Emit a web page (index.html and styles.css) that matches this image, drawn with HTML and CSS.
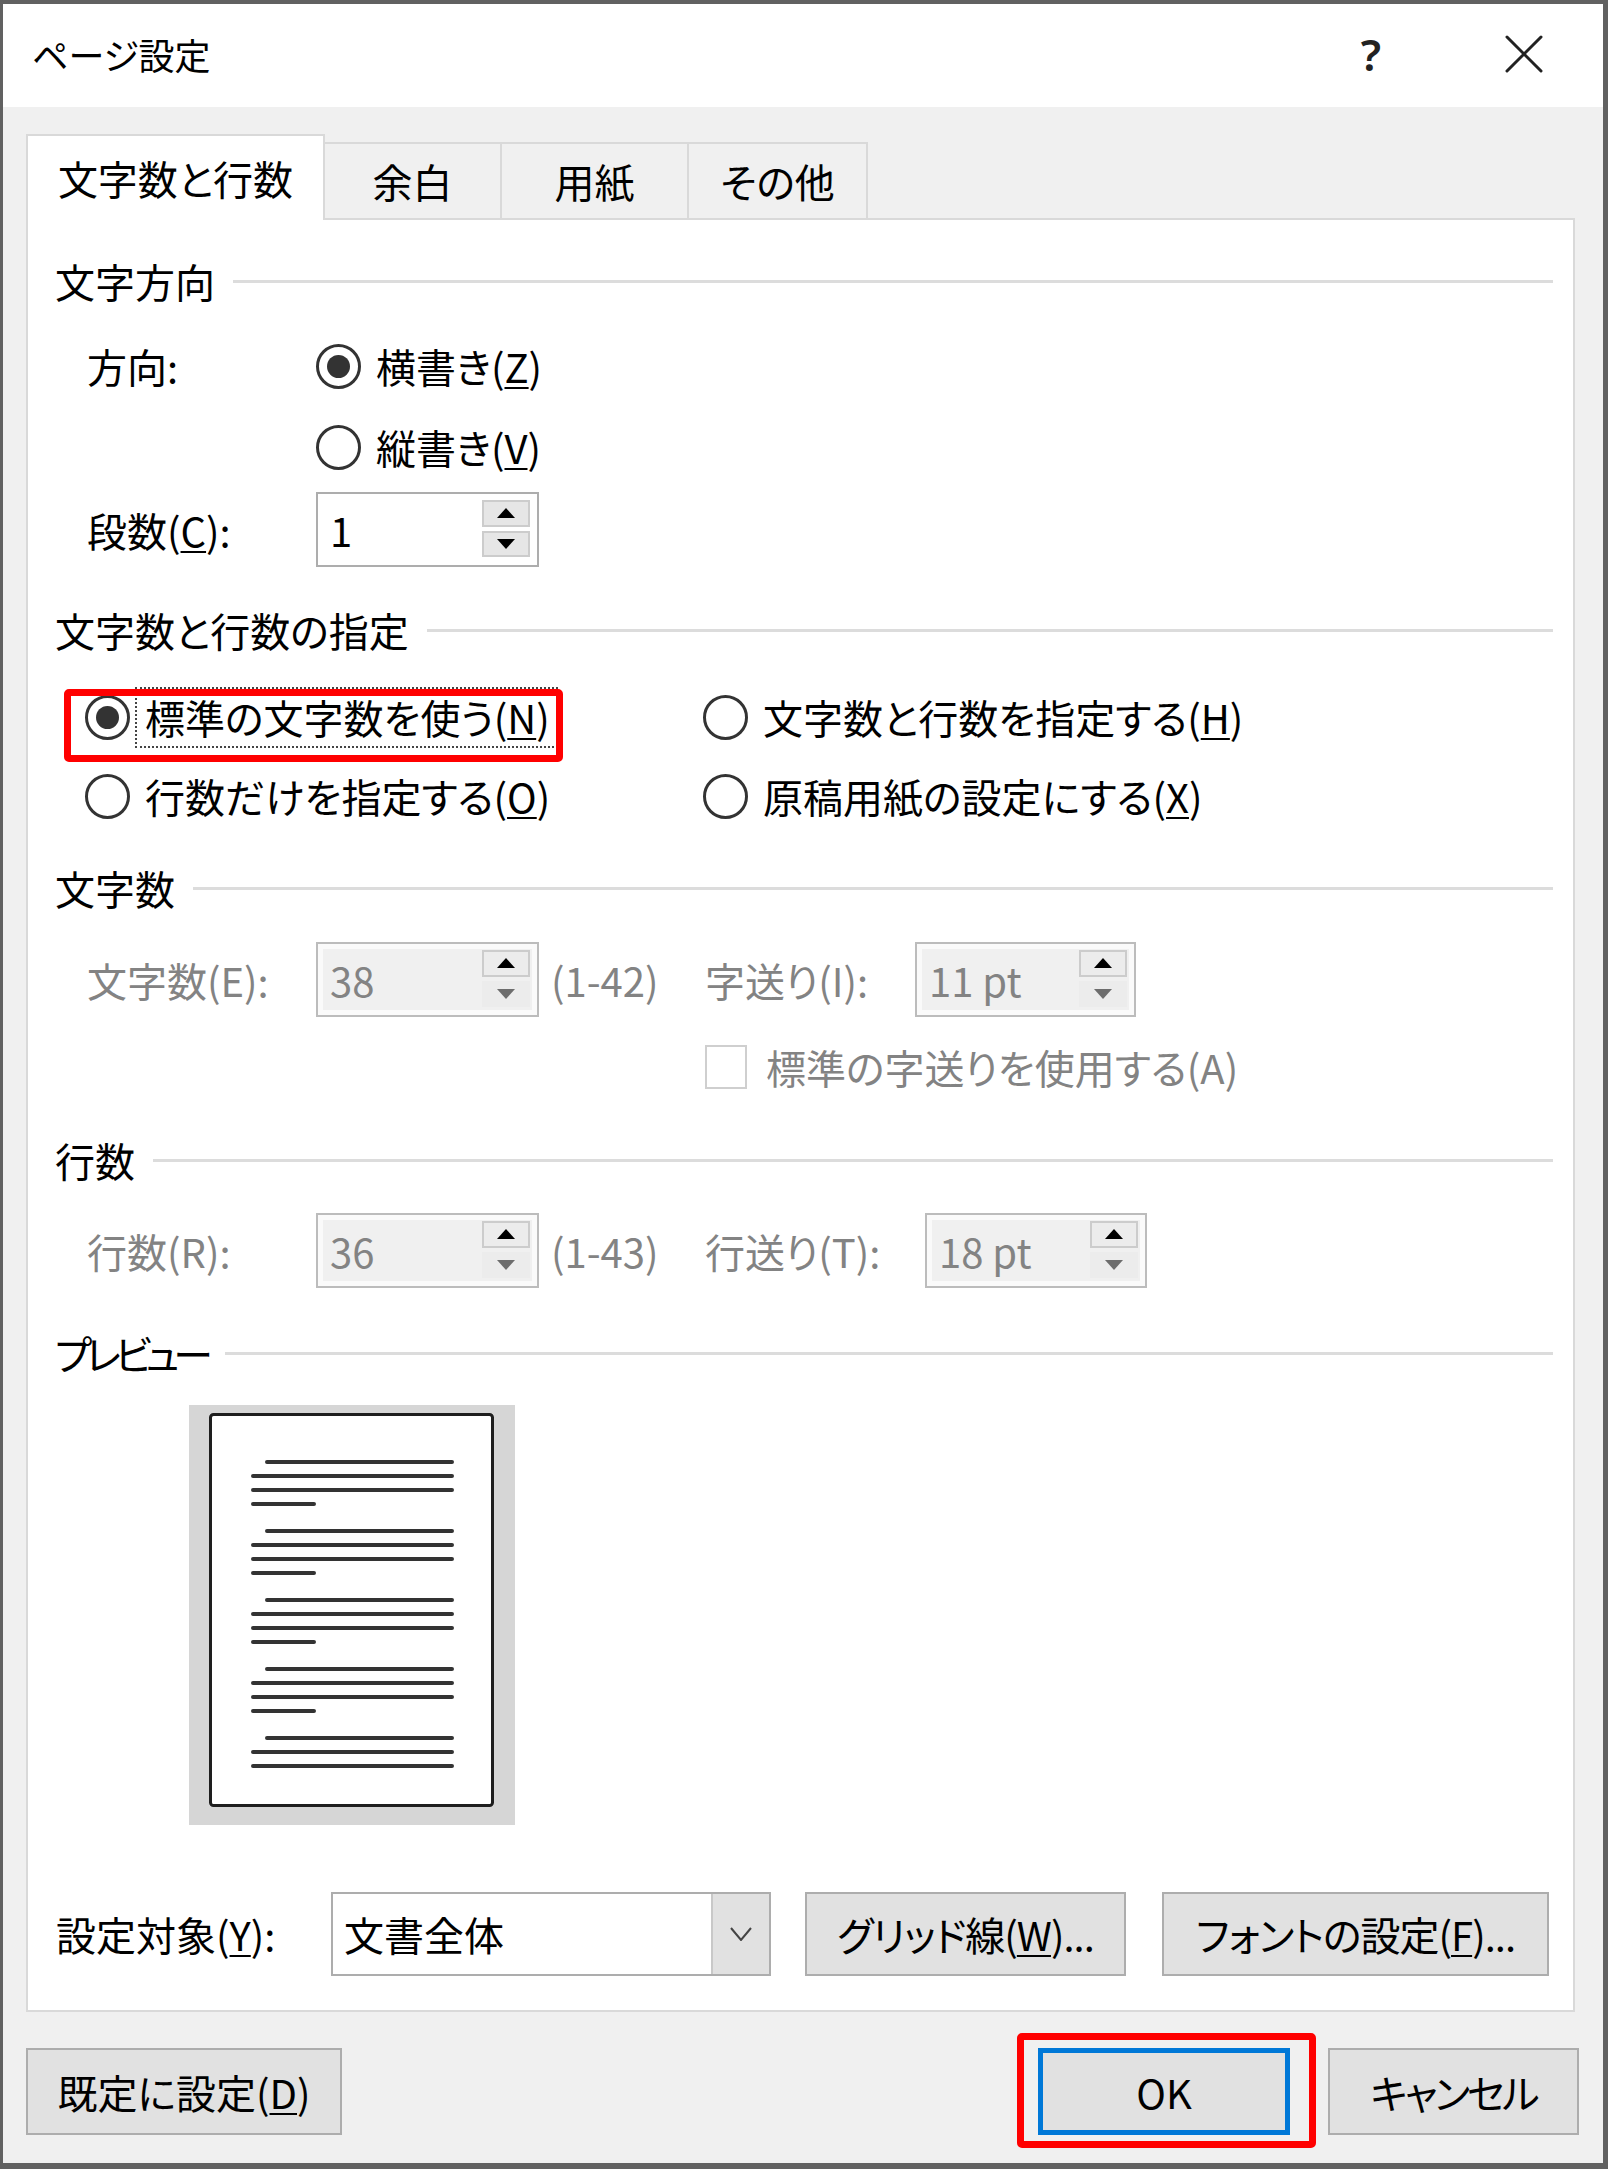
FILE: index.html
```html
<!DOCTYPE html>
<html lang="ja">
<head>
    <meta charset="UTF-8">
    <title>ページ設定</title>
    <link rel="stylesheet" href="styles.css">
</head>
<body>
    <div class="dialog">
        <div class="titlebar">
            <span class="title">ページ設定</span>
            <span class="help">?</span>
            <svg class="close" width="38" height="38" viewBox="0 0 38 38">
                <path d="M2 2L36 36M36 2L2 36" stroke="#222" stroke-width="3" stroke-linecap="round"/>
            </svg>
        </div>

        <div class="tabs">
            <div class="tab active">文字数と行数</div>
            <div class="tab">余白</div>
            <div class="tab">用紙</div>
            <div class="tab">その他</div>
        </div>

        <div class="panel">
            <div class="sec-title sec-dir">文字方向</div>
            <div class="row r-dir">
                <span class="lbl">方向:</span>
                <label class="opt"><span class="radio on"></span><span class="opt-text">横書き(<u>Z</u>)</span></label>
            </div>
            <div class="row r-vert">
                <span class="lbl"></span>
                <label class="opt"><span class="radio"></span><span class="opt-text">縦書き(<u>V</u>)</span></label>
            </div>
            <div class="row r-cols">
                <span class="lbl">段数(<u>C</u>):</span>
                <div class="spin">
                    <span class="spin-val">1</span>
                    <div class="spin-btns">
                        <span class="spin-btn"><i class="tri up"></i></span>
                        <span class="spin-btn"><i class="tri down"></i></span>
                    </div>
                </div>
            </div>

            <div class="sec-title sec-grid">文字数と行数の指定</div>
            <div class="opt-grid">
                <label class="opt marked"><span class="radio on"></span><span class="opt-text focus">標準の文字数を使う(<u>N</u>)</span></label>
                <label class="opt"><span class="radio"></span><span class="opt-text">文字数と行数を指定する(<u>H</u>)</span></label>
                <label class="opt"><span class="radio"></span><span class="opt-text">行数だけを指定する(<u>O</u>)</span></label>
                <label class="opt"><span class="radio"></span><span class="opt-text">原稿用紙の設定にする(<u>X</u>)</span></label>
            </div>

            <div class="sec-title sec-chars">文字数</div>
            <div class="row r-chars dis">
                <span class="lbl">文字数(E):</span>
                <div class="spin disabled">
                    <span class="spin-val">38</span>
                    <div class="spin-btns">
                        <span class="spin-btn"><i class="tri up"></i></span>
                        <span class="spin-btn off"><i class="tri down"></i></span>
                    </div>
                </div>
                <span class="range">(1-42)</span>
                <span class="lbl2">字送り(I):</span>
                <div class="spin disabled">
                    <span class="spin-val">11 pt</span>
                    <div class="spin-btns">
                        <span class="spin-btn"><i class="tri up"></i></span>
                        <span class="spin-btn off"><i class="tri down"></i></span>
                    </div>
                </div>
            </div>
            <div class="row r-check dis">
                <span class="check"></span>
                <span class="check-text">標準の字送りを使用する(A)</span>
            </div>

            <div class="sec-title sec-lines">行数</div>
            <div class="row r-lines dis">
                <span class="lbl">行数(R):</span>
                <div class="spin disabled">
                    <span class="spin-val">36</span>
                    <div class="spin-btns">
                        <span class="spin-btn"><i class="tri up"></i></span>
                        <span class="spin-btn off"><i class="tri down"></i></span>
                    </div>
                </div>
                <span class="range">(1-43)</span>
                <span class="lbl2 wide">行送り(T):</span>
                <div class="spin disabled">
                    <span class="spin-val">18 pt</span>
                    <div class="spin-btns">
                        <span class="spin-btn"><i class="tri up"></i></span>
                        <span class="spin-btn off"><i class="tri down"></i></span>
                    </div>
                </div>
            </div>

            <div class="sec-title"><span class="kana">プレビュー</span></div>
            <svg class="preview" width="326" height="420" viewBox="0 0 326 420">
                <rect width="326" height="420" fill="#d6d6d6"/>
                <rect x="21.5" y="9.5" width="282" height="391" rx="3" fill="#fff" stroke="#1e1e1e" stroke-width="3"/>
                <g stroke="#333" stroke-width="4" stroke-linecap="round">
                    <path d="M78 57H263M64 71H263M64 85H263M64 99H125"/>
                    <path d="M78 126H263M64 140H263M64 154H263M64 168H125"/>
                    <path d="M78 195H263M64 209H263M64 223H263M64 237H125"/>
                    <path d="M78 264H263M64 278H263M64 292H263M64 306H125"/>
                    <path d="M78 333H263M64 347H263M64 361H263"/>
                </g>
            </svg>

            <div class="row r-apply">
                <span class="lbl-apply">設定対象(<u>Y</u>):</span>
                <div class="combo">
                    <span class="combo-val">文書全体</span>
                    <span class="combo-arrow">
                        <svg width="22" height="14" viewBox="0 0 22 14"><path d="M1 1L11 13L21 1" fill="none" stroke="#444" stroke-width="2"/></svg>
                    </span>
                </div>
                <button class="btn btn-grid">グリッド線(<u>W</u>)...</button>
                <button class="btn btn-font">フォントの設定(<u>F</u>)...</button>
            </div>
        </div>

        <div class="footer">
            <button class="btn btn-default">既定に設定(<u>D</u>)</button>
            <button class="btn btn-ok">OK</button>
            <button class="btn btn-cancel">キャンセル</button>
        </div>
    </div>
</body>
</html>
```

FILE: styles.css
```css
*, *::before, *::after {
    box-sizing: border-box;
}
body {
    margin: 0;
    font-family: "Noto Sans CJK JP", "Noto Sans", sans-serif;
    font-size: 40px;
    font-feature-settings: "palt";
    color: #000;
}
u {
    text-underline-offset: 4px;
    text-decoration-thickness: 2px;
}
.kana {
    letter-spacing: -6px;
}
.dialog {
    width: 1608px;
    height: 2169px;
    border: solid #616161;
    border-width: 4px 5px 6px 3px;
    background: #f0f0f0;
    display: flex;
    flex-direction: column;
}
.titlebar {
    flex: none;
    height: 103px;
    background: #fff;
    display: flex;
    align-items: center;
    padding: 0 60px 4px 29px;
}
.title {
    font-size: 36px;
}
.help {
    margin-left: auto;
    width: 40px;
    text-align: center;
    font-family: "Noto Sans", sans-serif;
    font-size: 44px;
    font-weight: 600;
    color: #222;
}
.close {
    margin-left: 114px;
}

/* tabs */
.tabs {
    flex: none;
    display: flex;
    align-items: flex-end;
    height: 86px;
    margin-top: 27px;
    padding-left: 23px;
}
.tab {
    height: 76px;
    margin-bottom: 2px;
    border: 2px solid #d9d9d9;
    border-left: none;
    border-bottom: none;
    display: flex;
    align-items: center;
    justify-content: center;
}
.tab.active {
    width: 299px;
    height: 86px;
    margin-bottom: 0;
    border-left: 2px solid #d9d9d9;
    background: #fff;
    position: relative;
    z-index: 1;
}
.tab:nth-child(2) { width: 177px; }
.tab:nth-child(3) { width: 187px; }
.tab:nth-child(4) { width: 179px; }

/* panel */
.panel {
    flex: none;
    margin: -2px 0 0 23px;
    width: 1549px;
    height: 1794px;
    background: #fff;
    border: 2px solid #d9d9d9;
    padding: 0 20px 0 27px;
}
.sec-title {
    display: flex;
    align-items: center;
    height: 50px;
    margin-top: 40px;
}
.sec-title::after {
    content: "";
    flex: 1;
    height: 3px;
    background: #dcdcdc;
    margin-left: 18px;
}
.sec-dir { margin-top: 36px; }
.sec-grid { margin-top: 38px; }
.sec-chars { margin-top: 42px; }
.sec-lines { margin-top: 43px; }

.row {
    display: flex;
    align-items: center;
    padding-left: 32px;
}
.lbl {
    width: 229px;
    flex: none;
}
.r-dir { height: 50px; margin-top: 35px; }
.r-vert { height: 50px; margin-top: 31px; }
.r-cols { height: 75px; margin-top: 20px; }
.r-chars { height: 75px; margin-top: 29px; }
.r-check { height: 50px; margin-top: 25px; }
.r-lines { height: 75px; margin-top: 28px; }
.dis { color: #838383; }

/* radio options */
.opt {
    display: flex;
    align-items: center;
    height: 50px;
    white-space: nowrap;
}
.radio {
    width: 45px;
    height: 45px;
    flex: none;
    border: 3px solid #333;
    border-radius: 50%;
    background: #fff;
    display: flex;
    align-items: center;
    justify-content: center;
}
.radio.on::after {
    content: "";
    width: 23px;
    height: 23px;
    border-radius: 50%;
    background: #333;
}
.opt-text {
    display: flex;
    align-items: center;
    height: 61px;
    margin-left: 5px;
    padding: 0 6px 0 8px;
    border: 2px dotted transparent;
}
.opt-text.focus {
    border-color: #444;
}
.opt-grid {
    display: grid;
    grid-template-columns: 618px auto;
    grid-auto-rows: 50px;
    row-gap: 29px;
    margin-top: 37px;
    padding-left: 30px;
}
.marked {
    position: relative;
}
.marked::after {
    content: "";
    position: absolute;
    left: -21px;
    top: -3px;
    width: 499px;
    height: 73px;
    border: 7px solid #f00;
    border-radius: 5px;
}

/* spinner */
.spin {
    width: 223px;
    height: 75px;
    flex: none;
    border: 2px solid #adadad;
    background: #fff;
    display: flex;
    align-items: center;
    padding: 0 7px 0 12px;
}
.spin-val {
    flex: 1;
    white-space: nowrap;
}
.spin-btns {
    width: 48px;
    align-self: stretch;
    display: flex;
    flex-direction: column;
    gap: 4px;
    padding: 6px 0 8px;
}
.spin-btn {
    flex: 1;
    background: #e6e6e6;
    border: 2px solid #cccccc;
    display: flex;
    align-items: center;
    justify-content: center;
}
.spin-btn.off {
    border-color: transparent;
    background: #ececec;
}
.tri {
    width: 0;
    height: 0;
    border-left: 9px solid transparent;
    border-right: 9px solid transparent;
}
.tri.up { border-bottom: 10px solid #000; }
.tri.down { border-top: 10px solid #000; }
.spin-btn.off .tri.down { border-top-color: #6d6d6d; }
.spin.disabled {
    border-color: #bcbcbc;
    background: #f0f0f0;
    box-shadow: inset 0 0 0 5px #fafafa;
}
.spin.disabled .spin-btn {
    background: #ececec;
}
.range {
    width: 166px;
    flex: none;
    padding-left: 12px;
}
.lbl2 {
    width: 210px;
    flex: none;
    white-space: nowrap;
}
.lbl2.wide {
    width: 220px;
}
.r-lines .spin:last-child {
    width: 222px;
}
.r-chars .spin:last-child {
    width: 221px;
}

/* checkbox */
.check {
    width: 42px;
    height: 44px;
    flex: none;
    margin-left: 618px;
    border: 2px solid #cfcfcf;
    background: #fff;
}
.check-text {
    margin-left: 19px;
    white-space: nowrap;
}

/* preview */
.preview {
    display: block;
    margin: 27px 0 0 134px;
}

/* bottom of panel */
.r-apply {
    height: 84px;
    margin-top: 67px;
    padding-left: 1px;
}
.lbl-apply {
    width: 275px;
    flex: none;
}
.combo {
    width: 440px;
    height: 84px;
    flex: none;
    border: 2px solid #adadad;
    background: #fff;
    display: flex;
}
.combo-val {
    flex: 1;
    display: flex;
    align-items: center;
    padding-left: 11px;
}
.combo-arrow {
    width: 58px;
    background: #e1e1e1;
    border-left: 2px solid #c8c8c8;
    display: flex;
    align-items: center;
    justify-content: center;
}
.btn {
    font: inherit;
    color: #000;
    height: 84px;
    padding: 0;
    border: 2px solid #adadad;
    background: #e1e1e1;
    display: flex;
    align-items: center;
    justify-content: center;
    white-space: nowrap;
}
.btn-grid {
    width: 321px;
    margin-left: 34px;
    letter-spacing: -1px;
}
.btn-font {
    width: 387px;
    margin-left: 36px;
    letter-spacing: -1px;
}

/* footer */
.footer {
    flex: none;
    display: flex;
    align-items: center;
    gap: 38px;
    height: 87px;
    margin-top: 36px;
    padding: 0 24px 0 23px;
}
.footer .btn {
    height: 87px;
}
.btn-default {
    width: 316px;
    margin-right: auto;
}
.btn-ok {
    width: 252px;
    border: 5px solid #0078d7;
    position: relative;
}
.btn-ok::after {
    content: "";
    position: absolute;
    left: -26px;
    top: -20px;
    width: 299px;
    height: 115px;
    border: 7px solid #f00;
    border-radius: 5px;
}
.btn-cancel {
    width: 251px;
    letter-spacing: -3px;
}
```
